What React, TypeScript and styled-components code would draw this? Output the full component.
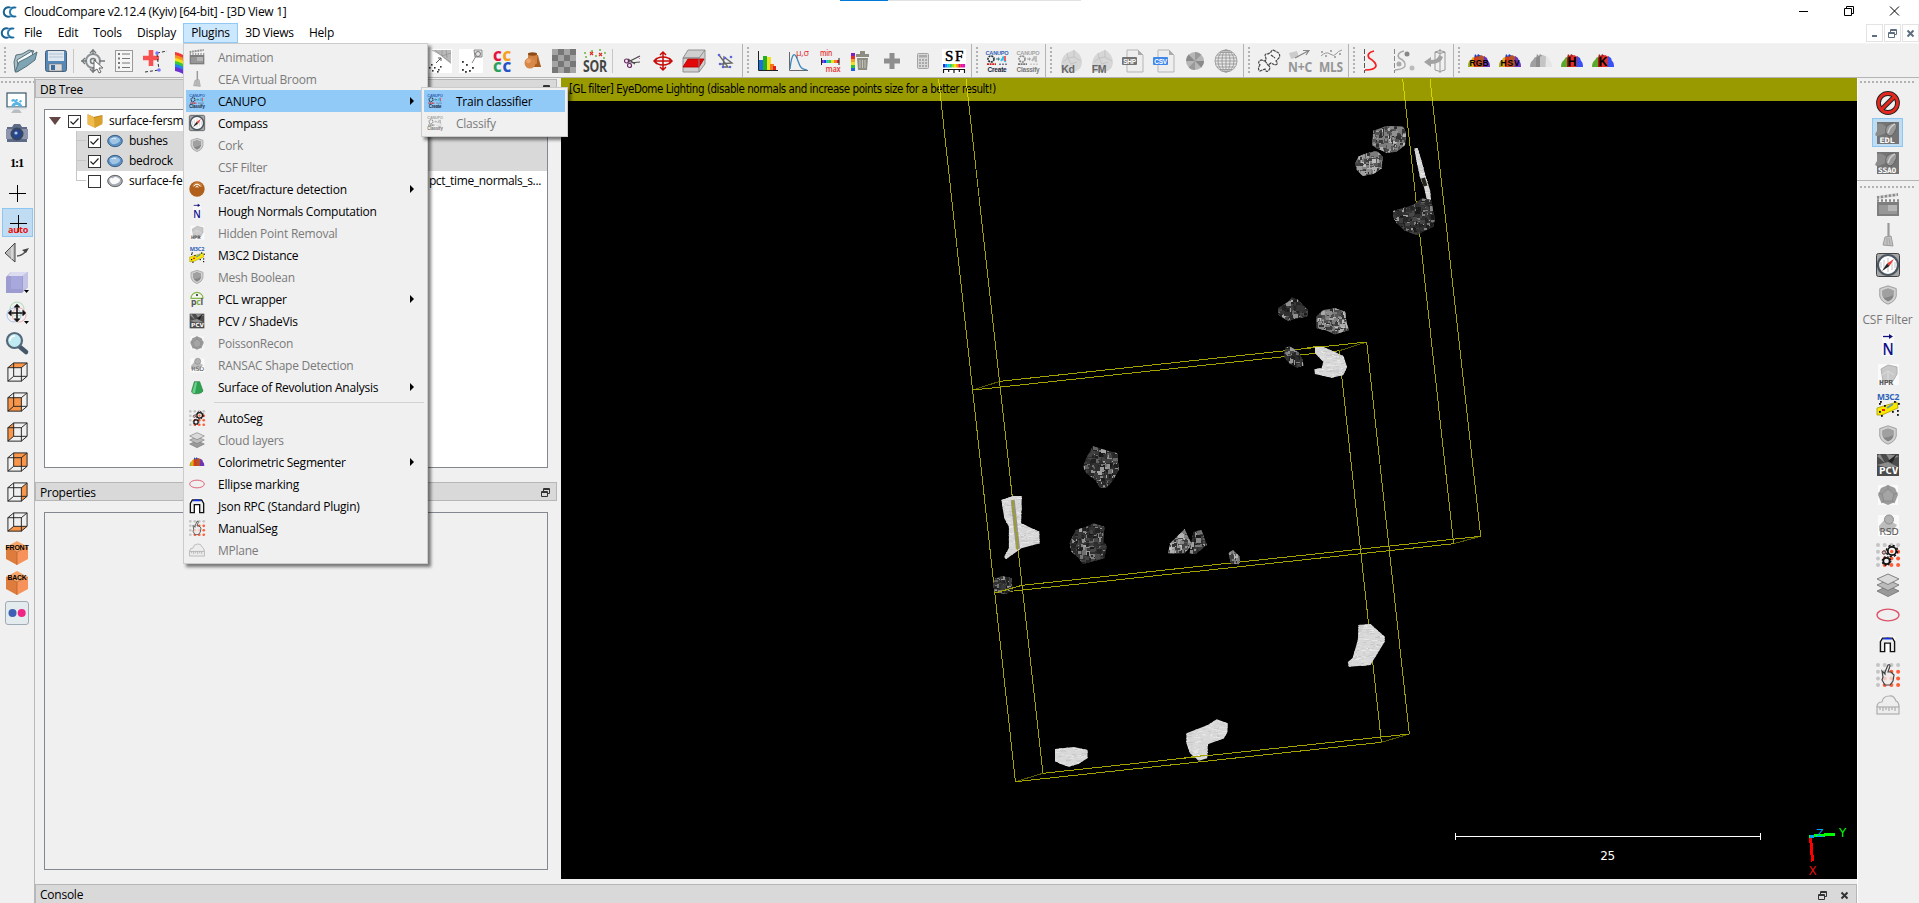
import React from "react";
import styled, { createGlobalStyle } from "styled-components";

const GlobalStyle = createGlobalStyle`
  *, *::before, *::after { box-sizing: border-box; }
  body { margin: 0; overflow: hidden; background: #f0f0f0; }
  text { user-select: none; }
`;

/* ---------- icon drawings (24 x 24 grid) ---------- */

const Dots = () => (
  <g>
    {[0, 1, 2, 3].map((r) =>
      [0, 1, 2, 3].map((c) => (
        <circle key={`${r}${c}`} cx={2 + c * 6.7} cy={2 + r * 6.7} r="2" fill={c === 0 || r === 0 || r + c < 3 ? "#c4c4c4" : "#ff5c38"} />
      ))
    )}
  </g>
);

type Face = "top" | "front" | "left" | "back" | "right" | "bottom";
const faces: Record<Face, string> = {
  top: "2,7 8,2 22,2 16,7",
  front: "2,7 16,7 16,21 2,21",
  left: "2,7 8,2 8,16 2,21",
  back: "8,2 22,2 22,16 8,16",
  right: "16,7 22,2 22,16 16,21",
  bottom: "2,21 8,16 22,16 16,21",
};
const Cube = ({ face }: { face: Face }) => (
  <g>
    <polygon points={faces[face]} fill="#f9964a" />
    <g fill="none" stroke="#222" strokeWidth="1">
      <rect x="2" y="7" width="14" height="14" />
      <path d="M8 2H22V16H8ZM2 7L8 2M16 7L22 2M2 21L8 16M16 21L22 16" />
    </g>
  </g>
);

const BoxView = ({ label }: { label: string }) => (
  <g>
    <polygon points="12,0 23,6 12,11 1,6" fill="#f6a468" />
    <polygon points="1,6 12,11 12,24 1,18" fill="#dd7c3c" />
    <polygon points="23,6 12,11 12,24 23,18" fill="#f7935a" />
    <path d="M1 6L12 11L23 6M12 11V24" fill="none" stroke="#b5602a" strokeWidth=".7" />
    <text x="12" y="8.500" fontSize="7.400" fontWeight="700" textAnchor="middle" fontFamily="Liberation Sans, sans-serif" textLength={label === "BACK" ? 19 : 23} lengthAdjust="spacingAndGlyphs">{label}</text>
  </g>
);

const Shield = () => (
  <g>
    <path d="M12 2L21 5V13Q20 19 12 22Q4 19 3 13V5Z" fill="#d0d0d0" stroke="#9a9a9a" />
    <path d="M12 5L18 7V13Q17 17 12 19Q7 17 6 12V7Z" fill="#858585" />
    <path d="M12 5L18 7V12Q12 15 8 15Q6 13 6 12V7Z" fill="#a0a0a0" />
  </g>
);

const Canupo = ({ label, grey }: { label: string; grey?: boolean }) => (
  <g fontFamily="Liberation Sans, sans-serif" fontWeight="700" textAnchor="middle">
    <text x="12" y="5.600" fontSize="6" fill={grey ? "#a3a3a3" : "#3264b4"} textLength="23" lengthAdjust="spacingAndGlyphs">CANUPO</text>
    <circle cx="6" cy="10" r="3" fill="none" stroke={grey ? "#8a8a8a" : "#20323c"} strokeWidth="1.600" strokeDasharray="2 .8" />
    <path d="M11 10H14M13 8.600L14.500 10L13 11.400" stroke={grey ? "#999" : "#267"} fill="none" />
    <path d="M16 12L19 7M17 9L21 13" stroke={grey ? "#bbb" : "#2fc3f0"} strokeWidth="2" strokeDasharray="2.400 .6" />
    <path d="M20 7V12" stroke={grey ? "#bbb" : "#f05050"} strokeWidth="1.800" />
    <path d="M2 15.200H11" stroke={grey ? "#777" : "#c22"} strokeWidth="1.800" strokeDasharray="2 .6" />
    <path d="M14 15.200H22" stroke={grey ? "#bbb" : "#446"} strokeWidth="1" strokeDasharray="2 1" />
    <text x="12" y="23" fontSize="7.200" fill={grey ? "#777" : "#18253c"} textLength={label === "Create" ? 19 : 23} lengthAdjust="spacingAndGlyphs">{label}</text>
  </g>
);

const Texture = ({ label }: { label: string }) => (
  <g>
    <rect x="1" y="1" width="22" height="22" fill="#747474" />
    <path d="M1 3Q6 1 10 6T5 14T1 10Z" fill="#8b8b8b" />
    <path d="M10 12Q8 4 17 2Q24 2 18 12Q14 18 10 12Z" fill="#999" stroke="#555" strokeWidth=".7" />
    <path d="M12 12Q14 5 19 3" stroke="#ccc" strokeWidth="1.500" fill="none" />
    <text x="11" y="21.500" fontSize="7.500" fontWeight="700" fill="#fff" textAnchor="middle" fontFamily="DejaVu Sans Mono, monospace" textLength={label.length > 3 ? 18 : 15} lengthAdjust="spacingAndGlyphs">{label}</text>
  </g>
);

const Hills = ({ letters, mode }: { letters: string; mode: "rgb" | "grey" | "hk" }) => {
  const c = mode === "rgb" ? ["#e0a818", "#d63a18", "#b5522c", "#6a35b8", "#2440c0"] : mode === "grey" ? ["#a0a0a0", "#8c8c8c", "#c4c4c4", "#e6e6e6", "#999"] : ["#5aa82c", "#b01818", "#e23028", "#3850f4", "#a02020"];
  return (
    <g>
      <path d="M7 9L8 5L10 7L11 5L14 7V17H6Z" fill={c[4]} />
      <path d="M1 18Q1 13 4 11L6 8L9 9V18Z" fill={c[0]} />
      {mode === "rgb" && <path d="M1 18Q1 13 3 11.500V18Z" fill="#8eb52c" />}
      <path d="M7 18V9L10 7L13 9V18Z" fill={c[1]} />
      <path d="M11 18V8L14 6L18 8V18Z" fill={c[2]} />
      <path d="M16.500 18L17 7L20 9L21 12Q23 13 23 18Z" fill={c[3]} />
      {letters && <text x="12" y="17" fontSize={letters.length > 1 ? 8.5 : 12.5} fontWeight="700" textAnchor="middle" fontFamily="Liberation Sans, sans-serif" textLength={letters.length > 1 ? 19 : undefined}>{letters}</text>}
    </g>
  );
};

const Page = ({ label, blue }: { label: string; blue?: boolean }) => (
  <g>
    <path d="M6 1H17L22 6V23H6Z" fill="#eee" stroke="#b5b5b5" />
    <path d="M17 1V6H22Z" fill="#aaa" />
    <rect x="1" y="8" width="15" height="8" rx="1" fill={blue ? "#3f87ea" : "#747474"} />
    <text x="8.500" y="14.600" fontSize="6.500" fontWeight="700" fill="#fff" textAnchor="middle" fontFamily="Liberation Sans, sans-serif">{label}</text>
  </g>
);

const Rock24 = ({ label }: { label: string }) => (
  <g>
    <path d="M2 19Q1 9 8 4L15 1Q23 5 23 14Q22 22 14 23H4Z" fill="#d6d6d6" />
    <path d="M4 13L9 9L8 4M9 9L15 8L15 1M15 8L22 12M9 9L12 15L18 13" fill="none" stroke="#bbb" strokeWidth=".7" />
    <text x="9" y="23.500" fontSize="10.500" fontWeight="700" fill="#666" textAnchor="middle" fontFamily="Liberation Sans, sans-serif">{label}</text>
  </g>
);

const OverText = ({ children, y, size, fill, w }: { children: string; y: number; size: number; fill: string; w?: number }) => (
  <text x="12" y={y} fontSize={size} fontWeight="700" fill={fill} textAnchor="middle" fontFamily="Open Sans, sans-serif" textLength={w} lengthAdjust="spacingAndGlyphs">{children}</text>
);

const drawings: Record<string, React.ReactNode> = {
  logo: (
    <g fill="none" strokeWidth="3.400">
      <path d="M12 4.500A8 8 0 1 0 12 19.500" stroke="#17608f" />
      <path d="M22 5A7.500 7.500 0 1 0 22 19" stroke="#2c7db0" />
      <path d="M10 4H23M10 20H23" stroke="#17608f" strokeWidth="1.500" />
    </g>
  ),
  open: (
    <g stroke="#4d6670" strokeWidth=".9" strokeLinejoin="round">
      <path d="M1 13L3 6L9 5L16 1L21 2L6 22H2Z" fill="#a9bfc8" />
      <path d="M4 11L19 2L20 8L6 21Z" fill="#f8fbfc" />
      <path d="M2 23L6 13L14 9L24 3L22 11L14 17L4 23Z" fill="#7fa4b4" />
    </g>
  ),
  save: (
    <g>
      <rect x="1.500" y="1.500" width="21" height="21" rx="2" fill="#5488b8" stroke="#4a5f73" />
      <rect x="4" y="2" width="16" height="10" fill="#dfe8f0" />
      <path d="M5 5H19M5 8H19" stroke="#b2c4d4" />
      <path d="M5 15H18V22H5Z" fill="#dcdcdc" stroke="#777" strokeWidth=".6" />
      <rect x="7" y="16" width="4" height="5" fill="#3a6ea0" />
    </g>
  ),
  pick: (
    <g fill="none" stroke="#747a7d" strokeWidth="2">
      <circle cx="12" cy="12" r="7" stroke="#8d9396" />
      <circle cx="12" cy="12" r="2.500" strokeWidth="1.500" />
      <path d="M12 0V6M12 18V24M0 12H6M18 12H24M9 4L12 1L15 4M4 9L1 12L4 15M9 20L12 23L15 20" strokeWidth="1.300" />
      <path d="M13 11L22 19L18 19L20 23L18 24L16 20L13 22Z" fill="#fff" strokeWidth="1" stroke="#666" />
    </g>
  ),
  list: (
    <g>
      <rect x="3.500" y="1.500" width="17" height="21" fill="#f5f5f5" stroke="#999" />
      <path d="M10 5H18M10 9.500H18M10 14H18M10 18.500H18" stroke="#777" />
      <path d="M6 5H8M6 9.500H8M6 14H8M6 18.500H8" stroke="#777" strokeWidth="2" />
    </g>
  ),
  pointPick: (
    <g>
      <path d="M0 9H16M8 1V17" stroke="#f65050" strokeWidth="4.600" />
      <path d="M14 4L24 2M14 5L16 21M2 23L16 21" stroke="#333" strokeDasharray="3 2" fill="none" />
      <circle cx="14" cy="4" r="1.800" fill="#77f" />
      <circle cx="16" cy="21" r="1.800" fill="#77f" />
    </g>
  ),
  rainbow: (
    <g>
      {["#f03838", "#f59420", "#f1e318", "#38c838", "#2880f0", "#6b30d0"].map((c, i) => (
        <path key={c} d={`M1 ${3 + i * 3}Q7 ${4 + i * 3} 14 ${9 + i * 3}V${13 + i * 3}Q7 ${8 + i * 3} 1 ${7 + i * 3}Z`} fill={c} />
      ))}
    </g>
  ),
  meshDist: (
    <g>
      <rect width="24" height="24" fill="#fff" />
      <path d="M3 1H23V15L12 6Z" fill="#b9b9b9" />
      <path d="M7 1L14 7L23 4M14 1L14 7L22 13M18 1L19 9" fill="none" stroke="#888" strokeWidth=".6" />
      <path d="M8 14L13 9M13 9V12M13 9H10" stroke="#555" fill="none" />
      {[[3, 15], [6, 18], [4, 21], [10, 20], [12, 17], [9, 22], [1, 18]].map(([x, y]) => <rect key={`${x}${y}`} x={x} y={y} width="1.600" height="1.600" fill="#333" />)}
    </g>
  ),
  sampling: (
    <g>
      <rect width="24" height="24" fill="#fff" />
      <path d="M13 14L17 7M15 1H23V8H16Z" stroke="#888" fill="#e5e5e5" />
      <circle cx="19" cy="5" r="2.500" fill="none" stroke="#777" />
      {[[3, 12], [7, 15], [3, 20], [10, 21], [13, 18], [6, 22]].map(([x, y]) => <rect key={`${x}${y}`} x={x} y={y} width="1.800" height="1.800" fill="#333" />)}
    </g>
  ),
  cccc: (
    <g fontFamily="Open Sans, sans-serif" fontWeight="800" fontSize="13.500">
      <text x="3" y="11.500" fill="#e6143c">C<tspan x="12.500" fill="#f5a018">C</tspan></text>
      <text x="3" y="22.500" fill="#28a060">C<tspan x="12.500" fill="#2850c8">C</tspan></text>
    </g>
  ),
  shapes: (
    <g>
      <path d="M12 6H17L20 18H12Z" fill="#b66a2c" />
      <path d="M16 8L20 18H10Z" fill="#a85e22" />
      <rect x="7" y="4" width="9" height="11" rx="1" fill="#cf8245" />
      <ellipse cx="11.500" cy="5" rx="4.500" ry="1.700" fill="#8c4a16" />
      <circle cx="9" cy="14" r="5.500" fill="#d88848" />
      <circle cx="7.500" cy="12" r="2.300" fill="#eaa56e" />
    </g>
  ),
  checker: (
    <g>
      <rect width="24" height="24" fill="#777" />
      {[0, 1, 2, 3].map((r) => [0, 1].map((c) => <rect key={`${r}${c}`} x={(r % 2 ? 6 : 0) + c * 12} y={r * 6} width="6" height="6" fill="#a4a4a4" />))}
    </g>
  ),
  sor: (
    <g>
      {[[2, 4], [9, 2], [17, 1], [22, 4], [13, 7], [21, 9], [3, 8]].map(([x, y]) => <circle key={`${x}${y}`} cx={x} cy={y} r="1" fill="#69b43c" />)}
      <path d="M7 3L10 6M10 3L7 6M16 4L19 7M19 4L16 7" stroke="#d83020" strokeWidth="1.200" />
      <OverText y={23} size={15.5} fill="#444" w={24}>SOR</OverText>
    </g>
  ),
  scissors: (
    <g fill="none">
      <path d="M8 13L20 7M9 14L20 13M8 10L15 15" stroke="#4a4a4a" strokeWidth="1.200" />
      <circle cx="6.500" cy="12" r="2" stroke="#6d2868" strokeWidth="1.200" />
      <circle cx="9.500" cy="16.500" r="2" stroke="#6d2868" strokeWidth="1.200" />
      <path d="M17 7L20 10" stroke="#b8b" />
    </g>
  ),
  translate: (
    <g fill="none" stroke="#c80c0c" strokeWidth="1.500">
      <path d="M12 3V21M9 6L12 3L15 6M9 18L12 21L15 18M4 12H20M6 9L3 12L6 15M18 9L21 12L18 15" />
      <ellipse cx="12" cy="12" rx="7.500" ry="4" />
    </g>
  ),
  section: (
    <g stroke="#888" strokeWidth=".9">
      <path d="M6 1H23V15L17 23H1V9Z" fill="#cfcfcf" />
      <path d="M1 9H17L23 1M17 9V23" fill="none" />
      <path d="M6 10H22L17 18H1Z" fill="#e00808" stroke="#b00" />
      <path d="M1 9H17V18" fill="none" />
    </g>
  ),
  polyline: (
    <g>
      <path d="M6 6L15 18L10 18L11 8L19 14L7 15" fill="none" stroke="#666" strokeWidth="1.300" />
      {[[6, 6], [17, 18], [10, 18], [12, 9], [18, 8], [7, 15]].map(([x, y]) => <circle key={`${x}${y}`} cx={x} cy={y} r="1.300" fill="#5c64dc" />)}
    </g>
  ),
  histogram: (
    <g>
      <path d="M3 11H7V21H3Z" fill="#1870d8" /><path d="M7 7H11V21H7Z" fill="#24b024" /><path d="M11 8H15V21H11Z" fill="#f0e020" /><path d="M14 15H18V21H14Z" fill="#f07a18" /><path d="M17 17H20V21H17Z" fill="#e02020" />
      <path d="M2.500 2V21.500H22" stroke="#222" fill="none" />
    </g>
  ),
  gauss: (
    <g>
      <path d="M2.500 3V21.500H21" stroke="#666" fill="none" />
      <path d="M3 20C5 2 8 3 11 12S16 20 20 21" fill="none" stroke="#3c88b8" strokeWidth="1.300" />
      <text x="9" y="6.500" fontSize="9" fill="#e03030" fontFamily="Open Sans, sans-serif">μ,σ</text>
    </g>
  ),
  minmax: (
    <g>
      {["#8020c0", "#2040f0", "#20c0c0", "#40d020", "#f0e020", "#f08020", "#f02020"].map((c, i) => <rect key={c} x={3 + i * 2.6} y="11" width="2.600" height="3" fill={c} />)}
      <path d="M3.500 9V16M21 9V16" stroke="#222" />
      <text x="2" y="6.500" fontSize="8" fontWeight="600" fill="#e23232" fontFamily="Open Sans, sans-serif" textLength="12" lengthAdjust="spacingAndGlyphs">min</text>
      <text x="15" y="22.500" fontSize="8.500" fontWeight="600" fill="#e23232" textAnchor="middle" fontFamily="Open Sans, sans-serif" textLength="15" lengthAdjust="spacingAndGlyphs">max</text>
    </g>
  ),
  trash: (
    <g>
      {["#8020c0", "#e03030", "#f0a020", "#e8e020", "#30c030", "#2060e0"].map((c, i) => <rect key={c} x="2" y={4 + i * 3} width="4" height="3" fill={c} />)}
      <path d="M7 5H20V8H7ZM11 2H16V5H11ZM8 9H19L18 21H9Z" fill="#8d8d82" />
      <path d="M11 11V19M13.500 11V19M16 11V19" stroke="#c8c8be" />
    </g>
  ),
  plus: <path d="M4 12H20M12 4V20" stroke="#8e8e8e" strokeWidth="5" />,
  calc: (
    <g>
      <rect x="6.500" y="4.500" width="11" height="15" rx="1" fill="#d8d8d8" stroke="#a3a3a3" />
      <rect x="8" y="6" width="8" height="2.500" fill="#aaa" />
      <path d="M8 11H16M8 14H16M8 17H16" stroke="#999" strokeWidth="1.600" strokeDasharray="2 1" />
    </g>
  ),
  sf: (
    <g>
      <rect width="24" height="24" fill="#fff" />
      <text x="12" y="12" fontSize="15" textAnchor="middle" stroke="#000" strokeWidth=".5" fontFamily="Liberation Serif, serif" textLength="18">SF</text>
      {["#1830e0", "#1090f0", "#10c8e8", "#20d060", "#a0e020", "#f8e010", "#f89010", "#f02020", "#e81890", "#e010d0"].map((c, i) => <rect key={c} x={1 + i * 2.2} y="15" width="2.300" height="3.500" fill={c} />)}
      <path d="M1 20.500H23M1.500 20V24M6.700 20V23M12 20V24M17.300 20V23M22.500 20V24" stroke="#111" strokeWidth="1.200" fill="none" />
    </g>
  ),
  canupoCreate: <Canupo label="Create" />,
  canupoClassify: <Canupo label="Classify" />,
  canupoClassifyGrey: <Canupo label="Classify" grey />,
  kd: <Rock24 label="Kd" />,
  fm: <Rock24 label="FM" />,
  shp: <Page label="SHP" />,
  csv: <Page label="CSV" blue />,
  pie: (
    <g>
      <circle cx="12" cy="12" r="9" fill="#b6b6b6" />
      {[0, 90, 180, 270].map((a) => <path key={a} d="M12 12L12 3A9 9 0 0 1 18.400 5.600Z" fill={a % 180 ? "#8a8a8a" : "#999"} transform={`rotate(${a} 12 12)`} />)}
    </g>
  ),
  sphere: (
    <g fill="none" stroke="#999" strokeWidth=".9">
      <circle cx="12" cy="12" r="11" fill="#e8e8e8" />
      <ellipse cx="12" cy="12" rx="8" ry="11" /><ellipse cx="12" cy="12" rx="4" ry="11" />
      <path d="M1 12H23M2 9H22M2 15H22M3 6H21M3 18H21M6 3.500H18M6 20.500H18M12 1V23" />
    </g>
  ),
  puzzle: (
    <path d="M8 7Q8 4 11 5L14 3Q15 0 18 2L20 3Q24 5 22 9L19 12Q22 15 18 16L14 14L11 16Q14 18 12 21Q9 24 8 20L3 22Q0 20 3 16Q0 13 4 11L8 12Q10 10 8 7ZM8 12L11 16M14 6L18 9" fill="#f4f4f4" stroke="#444" strokeWidth="1.200" strokeDasharray="3 .6" />
  ),
  nc: (
    <g>
      <path d="M1 4L9 2L11 8L3 10Z" fill="#ccc" />
      <path d="M7 9L20 2M15 1.500H21L18 6" stroke="#888" fill="none" strokeWidth="1.200" />
      <OverText y={23} size={14.5} fill="#969696" w={24}>N+C</OverText>
    </g>
  ),
  mls: (
    <g>
      <path d="M2 7Q7 2 11 5T17 5T23 1" fill="none" stroke="#999" />
      {[[3, 3], [7, 7], [12, 2], [16, 8], [21, 5]].map(([x, y]) => <circle key={x} cx={x} cy={y} r=".9" fill="#888" />)}
      <OverText y={23} size={14.5} fill="#969696" w={24}>MLS</OverText>
    </g>
  ),
  sRed: (
    <g fill="none">
      <path d="M2.500 0V24" stroke="#555" strokeDasharray="5 2" />
      <path d="M12 2Q4 4 7 9Q14 13 14 17Q13 21 3 21" stroke="#f42020" strokeWidth="1.700" />
    </g>
  ),
  sGrey: (
    <g fill="none">
      <path d="M1.500 0V24" stroke="#888" strokeDasharray="5 2" />
      <path d="M11 2Q3 4 6 9Q13 12 12 17Q11 20 2 21" stroke="#aaa" strokeWidth="1.500" />
      <circle cx="14" cy="5" r="2.500" fill="#888" /><circle cx="6" cy="15" r="2.500" fill="#aaa" /><circle cx="19" cy="19" r="2.500" fill="#bbb" />
    </g>
  ),
  unroll: (
    <g fill="none" stroke="#999">
      <path d="M11 3V21Q16 24 21 21V3Q16 0 11 3Q16 6 21 3M16 0V24" />
      <path d="M0 13L7 8V11Q14 11 15 6L19 8Q17 15 7 15V18Z" fill="#a2a2a2" stroke="none" />
    </g>
  ),
  rgb: <Hills letters="RGB" mode="rgb" />,
  hsv: <Hills letters="HSV" mode="rgb" />,
  greyHills: <Hills letters="" mode="grey" />,
  colorHills: <Hills letters="" mode="rgb" />,
  hHills: <Hills letters="H" mode="hk" />,
  kHills: <Hills letters="K" mode="hk" />,
  monitor: (
    <g>
      <rect x="2" y="2" width="19" height="14" fill="#fff" stroke="#35566c" strokeWidth="1.200" />
      <path d="M6 15.500A6 6 0 0 1 17.500 15.500H14A2.500 2.500 0 0 0 9.500 15.500Z" fill="#5ab4e6" />
      <path d="M6.500 10L8.500 9L15 14M11.700 8V10M16.500 9.500L14.500 11" stroke="#5ab4e6" strokeWidth="2" fill="none" />
      <path d="M1.500 16.500H21.500V18.500H1.500Z" fill="#dde2e6" /><path d="M9 18.500H14L17 22H6Z" fill="#b8bec4" />
    </g>
  ),
  camera: (
    <g>
      <path d="M2 6H7L9 3H15L17 6H22V21H2Z" fill="#5d6b86" />
      <rect x="1" y="8" width="22" height="10" fill="#8d96ad" />
      <circle cx="12" cy="13" r="6.500" fill="#3a4660" /><circle cx="12" cy="13" r="4.500" fill="#26468c" /><circle cx="11" cy="12" r="1.600" fill="#b4c8f0" />
    </g>
  ),
  one: <text x="12" y="16" fontSize="12.500" fontWeight="700" textAnchor="middle" fontFamily="Liberation Serif, serif" textLength="14">1:1</text>,
  cross: <path d="M12.500 4V21M4 12.500H21" stroke="#000" fill="none" />,
  auto: (
    <g>
      <path d="M13.500 4V21M5 12.500H22" stroke="#000" fill="none" />
      <text x="13" y="22" fontSize="9.500" fontWeight="700" fill="#e81010" textAnchor="middle" fontFamily="Open Sans, sans-serif" textLength="20" lengthAdjust="spacingAndGlyphs">auto</text>
    </g>
  ),
  camDir: (
    <g>
      <path d="M10 2V21L0 12Z" fill="#bbb" stroke="#444" /><path d="M7 6V18" stroke="#eee" />
      <path d="M12 15Q17 15 21 10" fill="none" stroke="#555" strokeWidth="1.500" /><path d="M24 7L17 9L21 12Z" fill="#444" />
    </g>
  ),
  purple: (
    <g>
      <path d="M6 1H23V16L17 22H1V6Z" fill="#9c9cd0" /><path d="M6 1H23L18 5H3Z" fill="#dcdcf0" /><rect x="6" y="5" width="11" height="13" fill="#a8a8dc" /><path d="M18 5L23 1V16L18 20Z" fill="#c4c4e6" />
      <path d="M19 19H24L21.500 22Z" fill="#000" />
    </g>
  ),
  move: (
    <g fill="none">
      <circle cx="12" cy="8" r="7" stroke="#a9dcb0" /><circle cx="9" cy="14" r="7" stroke="#a8c4ee" /><circle cx="14" cy="14" r="7" stroke="#f0b0b0" />
      <path d="M12 4V20M4 12H20M9.500 6.500L12 4L14.500 6.500M9.500 17.500L12 20L14.500 17.500M6.500 9.500L4 12L6.500 14.500M17.500 9.500L20 12L17.500 14.500" stroke="#111" strokeWidth="1.600" />
      <path d="M19 20H24L21.500 23Z" fill="#000" />
    </g>
  ),
  zoom: (
    <g>
      <path d="M15 16L21 21" stroke="#44586a" strokeWidth="4.600" strokeLinecap="round" />
      <circle cx="9.500" cy="9.500" r="7.500" fill="#bfeaf2" stroke="#54687a" strokeWidth="2.200" /><path d="M5 10Q5 5 10 5" fill="none" stroke="#fff" strokeWidth="1.500" />
    </g>
  ),
  cubeTop: <Cube face="top" />, cubeFront: <Cube face="front" />, cubeLeft: <Cube face="left" />,
  cubeBack: <Cube face="back" />, cubeRight: <Cube face="right" />, cubeBottom: <Cube face="bottom" />,
  isoFront: <BoxView label="FRONT" />, isoBack: <BoxView label="BACK" />,
  flickr: (
    <g>
      <rect x=".5" y=".5" width="23" height="23" rx="2.500" fill="#e4ebef" stroke="#9fabb3" />
      <circle cx="7.500" cy="12" r="4" fill="#3e60b4" /><circle cx="16.700" cy="12" r="4" fill="#f02484" />
    </g>
  ),
  forbid: (
    <g fill="none">
      <circle cx="12" cy="12" r="9.500" stroke="#222" strokeWidth="4.800" /><path d="M5.500 18.500L18.500 5.500" stroke="#222" strokeWidth="5" />
      <circle cx="12" cy="12" r="9.500" stroke="#e4281e" strokeWidth="2.800" /><path d="M5.500 18.500L18.500 5.500" stroke="#e4281e" strokeWidth="3" />
    </g>
  ),
  edl: <Texture label="EDL" />, ssao: <Texture label="SSAO" />,
  clapper: (
    <g>
      <rect x="1" y="9" width="22" height="14" fill="#7e7e7e" /><path d="M3 12H21V21H3Z" fill="#979797" /><path d="M12 12H21V18H12Z" fill="#b6b6b6" />
      <path d="M1 3L22 0V3L1 6Z" fill="#ccc" /><path d="M1 4.500L22 1.500M1 7.500H23" stroke="#888" strokeWidth="2.500" strokeDasharray="2 2" />
    </g>
  ),
  broom: (
    <g>
      <path d="M12.500 0V14" stroke="#999" strokeWidth="2.200" /><path d="M9 14L15 13L17 23L7 22Z" fill="#c2c2c2" stroke="#9c9c9c" /><path d="M11 15V22M13 15L14 22" stroke="#999" strokeWidth=".7" />
    </g>
  ),
  compass: (
    <g>
      <rect x=".5" y=".5" width="23" height="23" rx="2" fill="#a6a6a6" stroke="#444" />
      <circle cx="12" cy="12" r="10" fill="#fff" stroke="#4b5763" strokeWidth="2.200" />
      <path d="M5 9V15M8 7V17M12 5V19M16 7V17M19 9V15" stroke="#aaa" strokeWidth=".7" />
      <path d="M18 6L13.500 13L11 10.500Z" fill="#e83c34" /><path d="M6 18L11 10.500L13.500 13Z" fill="#222" />
    </g>
  ),
  shield: <Shield />,
  facet: (
    <g>
      <circle cx="12" cy="12" r="11.500" fill="#b0601c" /><path d="M5 8Q7 1 14 2Q21 5 20 9Z" fill="#c9803c" />
      <path d="M7 8A5.500 5.500 0 0 1 17 8M10 9.500A2.500 2.500 0 0 1 14 9.500" fill="none" stroke="#fff" strokeWidth="1.500" />
    </g>
  ),
  hough: (
    <g>
      <rect x="6" y="1" width="12" height="22" fill="#f8f8f8" />
      <path d="M7 3.500H15" stroke="#10107c" strokeWidth="1.300" /><path d="M13 1L17 3.500L13 6Z" fill="#10107c" />
      <text x="12" y="22" fontSize="16" fontWeight="600" fill="#10108c" textAnchor="middle" fontFamily="Open Sans, sans-serif" textLength="11" lengthAdjust="spacingAndGlyphs">N</text>
    </g>
  ),
  hpr: (
    <g>
      <rect x="2" y="1" width="21" height="21" fill="#fafafa" /><path d="M5 6L12 2L21 4V11L17 18H7Z" fill="#c8c8c8" stroke="#b2b2b2" /><path d="M6 12L12 8L18 12M12 8L12 17" stroke="#ddd" fill="none" />
      <text x="10" y="21.500" fontSize="7" fontWeight="700" fill="#555" textAnchor="middle" fontFamily="DejaVu Sans Mono, monospace" textLength="14" lengthAdjust="spacingAndGlyphs">HPR</text>
    </g>
  ),
  m3c2: (
    <g>
      <OverText y={6.5} size={8} fill="#2c62b8" w={22}>M3C2</OverText>
      <path d="M1 15L21 9L22 15L6 22H1Z" fill="#f8e800" stroke="#a89a00" strokeWidth=".8" /><path d="M11 15L17 11" stroke="#69a" strokeWidth="2" />
      {[[3, 10], [8, 12], [4, 8], [18, 8], [22, 10], [21, 17], [21, 21], [5, 22], [16, 18], [3, 18]].map(([x, y]) => <rect key={`${x}-${y}`} x={x} y={y} width="1.800" height="1.800" fill="#111" />)}
      <rect x="6" y="16" width="3" height="2" fill="#e22" />
    </g>
  ),
  pcl: (
    <g>
      <path d="M3 11A9 9 0 1 1 21 11Z" fill="#f4f8f0" stroke="#84b84c" strokeWidth="1.800" /><circle cx="12" cy="6" r="1.600" fill="#333" />
      <text x="12" y="21" fontSize="13" fontWeight="700" fill="#555" textAnchor="middle" fontFamily="Open Sans, sans-serif">p<tspan fill="#78b040">c</tspan>l</text>
    </g>
  ),
  pcv: (
    <g>
      <rect x="1" y="1" width="22" height="22" fill="#4c4c4c" /><path d="M1 3L9 10L4 1ZM10 1L14 8L23 3ZM1 12L12 9L22 14L9 14Z" fill="#8d8d8d" /><path d="M12 8L21 1L16 10Z" fill="#222" />
      <text x="12.500" y="20.500" fontSize="8.500" fontWeight="700" fill="#fff" textAnchor="middle" fontFamily="DejaVu Sans Mono, monospace" textLength="19" lengthAdjust="spacingAndGlyphs">PCV</text>
    </g>
  ),
  poisson: (
    <g>
      <rect x="2" y="2" width="20" height="20" fill="#fafafa" /><path d="M12 2L19 5L22 12L19 19L12 22L5 19L2 12L5 5Z" fill="#9b9b9b" /><path d="M12 6L18 11L16 18H8L6 11ZM12 6V2M18 11L22 10M16 18L19 20M8 18L5 20M6 11L2 10" fill="#a5a5a5" stroke="#858585" strokeWidth=".8" />
    </g>
  ),
  rsd: (
    <g>
      <rect x="2" y="2" width="21" height="21" fill="#fafafa" /><path d="M10 5L3 13V18L16 19L21 12Z" fill="#bdbdbd" /><circle cx="13" cy="6.500" r="4.500" fill="#b2b2b2" stroke="#8d8d8d" />
      <text x="13" y="21.500" fontSize="9" fill="#555" textAnchor="middle" fontFamily="DejaVu Sans, sans-serif" textLength="19" lengthAdjust="spacingAndGlyphs">RSD</text>
    </g>
  ),
  cone: (
    <g>
      <path d="M8 4H16L21 18Q18 23 7 22Q3 20 4 18Z" fill="#2fa352" stroke="#2a7a40" /><path d="M9 5H12L9 21H6L5 19Z" fill="#6cd08c" />
    </g>
  ),
  autoseg: (
    <g>
      <Dots />
      <circle cx="16" cy="8" r="4.200" fill="#f0f0f0" stroke="#111" strokeWidth="1.800" /><circle cx="16" cy="8" r="5.600" fill="none" stroke="#111" strokeWidth="1.500" strokeDasharray="2.200 2.200" />
      <circle cx="15.700" cy="8.500" r="1.700" fill="#ff5c38" />
      <circle cx="10.500" cy="18" r="3.200" fill="#f0f0f0" stroke="#111" strokeWidth="1.700" /><circle cx="10.500" cy="18" r="4.300" fill="none" stroke="#111" strokeWidth="1.200" strokeDasharray="1.700 1.700" /><circle cx="8" cy="9.500" r="1.700" fill="none" stroke="#622" />
    </g>
  ),
  layers: (
    <g stroke="#777" strokeWidth=".9">
      <polygon points="12,13 23,18 12,23.500 1,18" fill="#999" /><polygon points="12,7 23,12 12,17.500 1,12" fill="#bbb" /><polygon points="12,1 23,6 12,11.500 1,6" fill="#dadada" />
    </g>
  ),
  ellipse: <ellipse cx="12" cy="12" rx="11" ry="5.800" fill="none" stroke="#dc5068" strokeWidth="1.300" />,
  json: (
    <g>
      <rect x="1" y="1" width="22" height="22" fill="#fff" /><path d="M2 22V8L5 3H19L22 8V22H16V10H8V22Z" fill="#eee" stroke="#111" strokeWidth="2" /><path d="M5 5Q12 -1 19 5Z" fill="#1030e8" />
    </g>
  ),
  manual: (
    <g>
      <Dots /><path d="M7 14L6 8L9 11V9L12 2Q14 1 14 3L12 9H15L18 12L17 18L14 22H9L6 17Z" fill="#efeae8" stroke="#444" strokeWidth="1.200" fillOpacity=".75" />
    </g>
  ),
  mplane: (
    <g fill="#ededed" stroke="#adadad" strokeWidth="1.200">
      <path d="M1 14Q1 9 6 9Q7 3 13 3Q18 2 20 8Q23 9 23 14" /><rect x="1" y="14" width="22" height="7" /><path d="M4 14V17M7 14V18M10 14V17M13 14V18M16 14V17M19 14V18" />
    </g>
  ),
  tree: (
    <g>
      <path d="M1 2L10 6L23 3V15L12 22L1 17Z" fill="#b87f1c" /><path d="M9 8L23 4V17L12 22Z" fill="#d9a02c" /><path d="M1 2L10 6L12 22L1 17Z" fill="#efbb4c" />
    </g>
  ),
  cloud: (
    <g>
      <ellipse cx="12" cy="12" rx="11" ry="8.500" fill="#5f93c4" stroke="#2c557d" strokeWidth="1.300" /><path d="M4 12Q3 6 9 8Q12 4 16 7Q22 9 18 14Q10 19 6 15Z" fill="#a0c4e4" /><path d="M7 9Q10 6 13 9" stroke="#e4f2ff" strokeWidth="1.600" fill="none" />
    </g>
  ),
  cloudGrey: (
    <g>
      <ellipse cx="12" cy="12" rx="11" ry="8.500" fill="#a9adb6" stroke="#555" strokeWidth="1.300" /><path d="M4 12Q3 6 9 8Q12 4 16 7Q22 9 18 14Q10 19 6 15Z" fill="#fafafa" />
    </g>
  ),
};

const IconSvg = styled.svg<{ $size: number }>`
  width: ${(p) => p.$size}px;
  height: ${(p) => p.$size}px;
  flex: none;
  display: block;
  overflow: visible;
`;
const Icon = ({ name, size = 24 }: { name: string; size?: number }) => (
  <IconSvg $size={size} viewBox="0 0 24 24">{drawings[name]}</IconSvg>
);

/* ---------- shell ---------- */

const Shell = styled.div`
  position: relative;
  width: 1919px;
  height: 903px;
  overflow: hidden;
  display: flex;
  flex-direction: column;
  background: #f0f0f0;
  color: #000;
  font: 12px/16px "Open Sans", "Noto Sans", sans-serif;
  letter-spacing: -0.24px;
  white-space: nowrap;
`;
const TitleBar = styled.header`
  display: flex;
  align-items: center;
  height: 22px;
  padding: 2px 19px 0 3px;
  background: #fff;
  flex: none;
`;
const TitleText = styled.span`
  flex: 1;
  margin-left: 7px;
  letter-spacing: -0.26px;
`;
const CaptionButtons = styled.div`
  display: flex;
  gap: 32px;
  margin-top: -3px;
`;
const Progress = styled.div`
  position: absolute;
  top: 0;
  left: 840px;
  width: 241px;
  height: 1px;
  background: linear-gradient(to right, #0078d7 48px, #e2e2e2 48px);
`;
const MenuBar = styled.nav`
  display: flex;
  align-items: center;
  height: 22px;
  padding: 1px 0 0 1px;
  background: #fff;
  border-bottom: 1px solid #f4f4f4;
  flex: none;
`;
const MenuTitle = styled.span<{ $w: number; $open?: boolean }>`
  width: ${(p) => p.$w}px;
  height: 20px;
  padding-top: 1px;
  text-align: center;
  border: 1px solid ${(p) => (p.$open ? "#90c8f6" : "transparent")};
  background: ${(p) => (p.$open ? "#cce8ff" : "transparent")};
`;
const MdiButtons = styled.div`
  display: flex;
  margin-left: auto;
  gap: 1px;
`;
const MdiButton = styled.span`
  width: 17px;
  height: 18px;
  border: 1px solid #e3e3e3;
  display: grid;
  place-items: center;
`;

const ToolBar = styled.div`
  display: flex;
  height: 34px;
  flex: none;
  border-bottom: 1px solid #b4b4b4;
`;
const ToolGroup = styled.div`
  display: flex;
  align-items: center;
  padding-right: 2px;
  border-right: 1px solid #b4b4b4;
`;
const Grip = styled.span<{ $row?: boolean }>`
  flex: none;
  width: ${(p) => (p.$row ? "56px" : "3px")};
  height: ${(p) => (p.$row ? "3px" : "28px")};
  margin: ${(p) => (p.$row ? "3px 0 0" : "0 2px 0 4px")};
  background-image: radial-gradient(circle at 1px 1px, #b2b2b2 1px, transparent 1.3px);
  background-size: 4px 4px;
`;
const Slot = styled.span`
  width: 31px;
  display: grid;
  place-items: center;
  flex: none;
`;
const ToolSeparator = styled.i`
  width: 1px;
  height: 24px;
  margin: 0 3px 0 2px;
  background: #c6c6c6;
`;
const UnderMenu = styled.span`
  width: 223px;
`;

const Body = styled.div`
  display: flex;
  flex: 1;
  min-height: 0;
`;
const SideBar = styled.aside`
  width: 35px;
  flex: none;
  display: flex;
  flex-direction: column;
  align-items: center;
  border-right: 1px solid #b8b8b8;
  overflow: hidden;
`;
const SideSlot = styled.span<{ $on?: boolean }>`
  width: 31px;
  height: 29px;
  margin-bottom: 1px;
  flex: none;
  display: grid;
  place-items: center;
  border: 1px solid ${(p) => (p.$on ? "#8ec6f2" : "transparent")};
  background: ${(p) => (p.$on ? "#c0dcf3" : "transparent")};
`;
const LeftIcons = styled.div`
  margin-top: 4px;
`;
const Center = styled.div`
  display: flex;
  flex-direction: column;
  flex: 1;
  min-width: 0;
`;
const CenterRow = styled.div`
  display: flex;
  height: 801px;
`;
const Docks = styled.section`
  width: 526px;
  flex: none;
  display: flex;
  flex-direction: column;
  padding: 1px 4px 9px 0;
`;
const DockTitle = styled.div`
  height: 19px;
  flex: none;
  display: flex;
  align-items: center;
  justify-content: space-between;
  padding: 2px 6px 0 4px;
  background: #d9d9d9;
  border: 1px solid #b6b6b6;
`;
const ConsoleTitle = styled(DockTitle)`
  margin-top: 5px;
  height: 20px;
  padding-right: 7px;
`;
const ConsoleRow = styled.div`
  display: flex;
  flex-direction: column;
  padding-left: 35px;
  background: linear-gradient(to right, transparent 34px, #b8b8b8 34px, #b8b8b8 35px, transparent 35px);
`;
const DockButtons = styled.span`
  display: flex;
  gap: 13px;
`;
const TreeBox = styled.div`
  height: 359px;
  margin: 11px 9px 14px 9px;
  padding-top: 1px;
  border: 1px solid #828790;
  background: #fff;
`;
const PropertyBox = styled.div`
  flex: 1;
  margin: 11px 9px 0 9px;
  border: 1px solid #828790;
`;
const TreeRow = styled.div<{ $child?: boolean; $selected?: boolean }>`
  display: flex;
  align-items: center;
  height: 20px;
  margin-left: ${(p) => (p.$child ? "31px" : "0")};
  padding: 0 6px 0 ${(p) => (p.$child ? "0" : "4px")};
  background: ${(p) => (p.$selected ? "#d9d9d9" : "transparent")};
`;
const Branch = styled.i<{ $last?: boolean }>`
  width: 10px;
  height: 20px;
  margin-right: 2px;
  background:
    linear-gradient(#c9c5c2, #c9c5c2) 0 0 / 1px ${(p) => (p.$last ? "10px" : "20px")} no-repeat,
    linear-gradient(#c9c5c2, #c9c5c2) 0 9px / 10px 1px no-repeat;
`;
const Check = styled.span`
  width: 13px;
  height: 13px;
  margin-right: 6px;
  border: 1px solid #333;
  background: #fff;
  display: grid;
  place-items: center;
`;
const TreeText = styled.span`
  margin-left: 6px;
`;
const RowTail = styled.span`
  margin-left: auto;
  letter-spacing: -0.35px;
`;

const ViewArea = styled.main`
  position: relative;
  width: 1296px;
  height: 801px;
  background: #000;
`;
const FilterStrip = styled.div`
  height: 23px;
  padding: 3px 0 0 8px;
  background: #999900;
  font: 11.5px/17px "DejaVu Sans Condensed", "DejaVu Sans", sans-serif;
  letter-spacing: -0.44px;
`;
const Scene = styled.svg`
  position: absolute;
  inset: 0;
  width: 1296px;
  height: 801px;
`;
const RightBar = styled.aside`
  width: 62px;
  flex: none;
  border-left: 1px solid #fff;
  padding-right: 2px;
  display: flex;
  flex-direction: column;
  align-items: center;
`;
const RightRule = styled.i`
  width: 62px;
  height: 1px;
  margin-bottom: 2px;
  background: #b5b5b5;
`;
const RightTop = styled.div`
  margin: 4px 0 2px;
`;
const RightGroup = styled.div`
  margin-top: 1px;
`;
const RightLabel = styled.span`
  height: 20px;
  padding-top: 2px;
  color: #777;
  letter-spacing: -0.15px;
`;

/* ---------- popup menus ---------- */

const Popup = styled.div<{ $x: number; $y: number; $w: number }>`
  position: absolute;
  left: ${(p) => p.$x}px;
  top: ${(p) => p.$y}px;
  width: ${(p) => p.$w}px;
  padding: 2px;
  background: #f0f0f0;
  border: 1px solid #ccc;
  box-shadow: 3px 3px 3px rgba(0, 0, 0, 0.5);
`;
const PopupRow = styled.div<{ $active?: boolean; $disabled?: boolean }>`
  display: flex;
  align-items: center;
  height: 22px;
  padding: 1px 11px 0 3px;
  color: ${(p) => (p.$disabled ? "#7a7a7a" : "#000")};
  background: ${(p) => (p.$active ? "#91c9f7" : "transparent")};
`;
const PopupIcon = styled.span`
  width: 16px;
  height: 16px;
  margin: -1px 13px 0 0;
  flex: none;
`;
const PopupArrow = styled.i`
  margin: -1px 0 0 auto;
  border: 4px solid transparent;
  border-left-color: #000;
  border-right: 0;
`;
const PopupRule = styled.hr`
  height: 1px;
  margin: 4px 1px 4px 28px;
  border: 0;
  background: #d2d2d2;
`;

type Entry = { label: string; icon?: string; off?: boolean; sub?: boolean; active?: boolean };
const pluginEntries: (Entry | null)[] = [
  { label: "Animation", icon: "clapper", off: true },
  { label: "CEA Virtual Broom", icon: "broom", off: true },
  { label: "CANUPO", icon: "canupoClassify", sub: true, active: true },
  { label: "Compass", icon: "compass" },
  { label: "Cork", icon: "shield", off: true },
  { label: "CSF Filter", off: true },
  { label: "Facet/fracture detection", icon: "facet", sub: true },
  { label: "Hough Normals Computation", icon: "hough" },
  { label: "Hidden Point Removal", icon: "hpr", off: true },
  { label: "M3C2 Distance", icon: "m3c2" },
  { label: "Mesh Boolean", icon: "shield", off: true },
  { label: "PCL wrapper", icon: "pcl", sub: true },
  { label: "PCV / ShadeVis", icon: "pcv" },
  { label: "PoissonRecon", icon: "poisson", off: true },
  { label: "RANSAC Shape Detection", icon: "rsd", off: true },
  { label: "Surface of Revolution Analysis", icon: "cone", sub: true },
  null,
  { label: "AutoSeg", icon: "autoseg" },
  { label: "Cloud layers", icon: "layers", off: true },
  { label: "Colorimetric Segmenter", icon: "colorHills", sub: true },
  { label: "Ellipse marking", icon: "ellipse" },
  { label: "Json RPC (Standard Plugin)", icon: "json" },
  { label: "ManualSeg", icon: "manual" },
  { label: "MPlane", icon: "mplane", off: true },
];
const canupoEntries: Entry[] = [
  { label: "Train classifier", icon: "canupoCreate", active: true },
  { label: "Classify", icon: "canupoClassifyGrey", off: true },
];

const MenuEntries = ({ entries }: { entries: (Entry | null)[] }) => (
  <>
    {entries.map((e, i) =>
      e ? (
        <PopupRow key={e.label} $active={e.active} $disabled={e.off}>
          <PopupIcon>{e.icon && <Icon name={e.icon} size={16} />}</PopupIcon>
          {e.label}
          {e.sub && <PopupArrow />}
        </PopupRow>
      ) : (
        <PopupRule key={i} />
      )
    )}
  </>
);

/* ---------- 3D scene ---------- */

type Tone = "light" | "dark" | "mixed";
type Stone = { id: string; tone: Tone; ox: number; oy: number; sx: number; pts: string };
const A = { ox: 1200, oy: 100, sx: 3 };
const B = { ox: 940, oy: 430, sx: 2.8 };
const stones: Stone[] = [
  { id: "a", tone: "mixed", ...A, pts: "520,92 560,78 610,80 618,100 615,135 590,155 560,158 530,145 516,135" },
  { id: "b", tone: "mixed", ...A, pts: "466,190 475,170 500,160 530,153 548,170 545,205 520,222 488,227 470,210" },
  { id: "c", tone: "light", ...A, pts: "643,145 653,145 664,180 677,230 690,270 693,300 681,300 672,262 660,232 649,180" },
  { id: "d", tone: "dark", ...A, pts: "579,333 640,315 665,295 693,300 700,335 705,355 700,380 680,390 650,405 615,392 590,370 579,350" },
  { id: "e", tone: "dark", ...A, pts: "234,625 265,605 275,592 295,600 323,630 322,650 290,655 265,663 236,645" },
  { id: "f", tone: "mixed", ...A, pts: "350,650 370,630 405,625 435,635 440,670 447,690 405,703 375,690 350,685" },
  { id: "g", tone: "dark", ...A, pts: "255,745 268,738 295,755 308,780 310,797 290,803 268,790 253,772" },
  { id: "h", tone: "light", ...A, pts: "345,738 365,738 395,752 430,768 441,800 430,825 395,833 345,822 343,808 365,805 370,785 345,760" },
  { id: "i", tone: "dark", ...B, pts: "400,110 412,80 428,48 445,55 497,70 500,120 485,150 468,172 448,173 435,150 410,130" },
  { id: "j", tone: "dark", ...B, pts: "363,340 380,300 410,290 430,280 460,290 458,335 467,350 460,385 400,402 385,380 368,365" },
  { id: "k", tone: "light", ...B, pts: "172,210 205,198 229,198 227,280 278,305 279,340 228,355 185,387 180,380 193,355 193,290 180,265" },
  { id: "l", tone: "mixed", ...B, pts: "638,370 645,340 685,297 705,345 685,370" },
  { id: "m", tone: "dark", ...B, pts: "698,370 710,305 732,300 747,345 715,373" },
  { id: "n", tone: "mixed", ...B, pts: "808,370 820,360 840,380 837,403 815,400" },
  { id: "o", tone: "dark", ...B, pts: "148,465 155,445 175,438 200,445 203,480 185,491 155,488" },
  { id: "p", tone: "light", ...B, pts: "1172,585 1205,582 1245,620 1245,635 1205,705 1145,710 1142,697 1155,685 1170,630" },
  { id: "q", tone: "light", ...B, pts: "322,957 375,951 413,960 413,985 385,1003 360,1010 340,1003 322,993" },
  { id: "r", tone: "light", ...B, pts: "690,910 750,885 775,868 805,880 805,905 795,925 750,943 748,985 725,992 700,970 690,940" },
];

const randomFrom = (seed: number) => {
  let s = seed;
  return () => {
    s = (s * 1664525 + 1013904223) >>> 0;
    return s / 4294967296;
  };
};

const StoneShape = ({ stone, seed }: { stone: Stone; seed: number }) => {
  const pts = stone.pts.split(" ").map((p) => {
    const [x, y] = p.split(",").map(Number);
    return [stone.ox + x / stone.sx, stone.oy + y / 3];
  });
  const xs = pts.map((p) => p[0]);
  const ys = pts.map((p) => p[1]);
  const x0 = Math.floor(Math.min(...xs));
  const x1 = Math.max(...xs);
  const y0 = Math.floor(Math.min(...ys));
  const y1 = Math.max(...ys);
  const rnd = randomFrom(seed * 7919 + 13);
  const count = Math.round(((x1 - x0) * (y1 - y0)) / 4.5);
  const base = { light: "#d8d8d8", dark: "#303030", mixed: "#7c7c7c" }[stone.tone];
  const shade = () => {
    const r = rnd();
    if (stone.tone === "light") return 198 + Math.round(r * 36);
    if (stone.tone === "dark") return rnd() < 0.72 ? 24 + Math.round(r * 50) : 90 + Math.round(r * 80);
    return rnd() < 0.5 ? 45 + Math.round(r * 50) : 120 + Math.round(r * 75);
  };
  return (
    <g shapeRendering="crispEdges">
      <clipPath id={`stone-${stone.id}`}>
        <polygon points={pts.map((p) => p.join(",")).join(" ")} />
      </clipPath>
      <g clipPath={`url(#stone-${stone.id})`}>
        <rect x={x0} y={y0} width={x1 - x0 + 1} height={y1 - y0 + 1} fill={base} />
        {Array.from({ length: count }, (_, i) => {
          const g = shade();
          return (
            <rect
              key={i}
              x={x0 - 1 + Math.floor(rnd() * (x1 - x0 + 1))}
              y={y0 - 1 + Math.floor(rnd() * (y1 - y0 + 1))}
              width={1 + Math.floor(rnd() * 5)}
              height={stone.tone === "light" ? 1 : 1 + Math.floor(rnd() * 5)}
              fill={`rgb(${g},${g},${g})`}
            />
          );
        })}
      </g>
    </g>
  );
};

const edges =
  "M938.6 79L1015.4 781.7M966 79L1042.9 773.3M1402.7 79L1453.6 543.7M1430 79L1480.7 536.3" +
  "M1022 585.3L1480.7 536.3M995 593L1453.6 543.7M1366.7 342L1409.3 734M1339 350.8L1381.4 742.3" +
  "M999.8 381.3L1366.7 342M973 390L1339 350.8M1015.4 781.7L1381.4 742.3M1042.9 773.3L1409.3 734";
const depthEdges = "M973 390L999.8 381.3M1339 350.8L1366.7 342M1015.4 781.7L1042.9 773.3M1381.4 742.3L1409.3 734M995 593L1022 585.3M1453.6 543.7L1480.7 536.3";

const SceneView = () => (
  <Scene viewBox="561 78 1296 801" fill="none">
    <path d={depthEdges} stroke="#5c5c00" shapeRendering="crispEdges" />
    <path d={edges} stroke="#a2a200" shapeRendering="crispEdges" />
    <path d="M938.6 79L941 101M966 79L968.4 101M1402.7 79L1405.1 101M1430 79L1432.4 101" stroke="#d4d400" shapeRendering="crispEdges" />
    {stones.map((s, i) => <StoneShape key={s.id} stone={s} seed={i + 1} />)}
    <path d="M1012.7 500L1014 512L1018 549" stroke="#77775a" strokeWidth="4" opacity=".7" />
    <path d="M1012.5 500L1018.200 552M995 593L1022 585.3M1184 757.800L1207 755.300M1307 347.500L1326 346" stroke="#a2a200" shapeRendering="crispEdges" />
    <path d="M1423 178L1425.500 186" stroke="#26261c" strokeWidth="4" />
    <path d="M1455.500 833V840M1760.500 833V840M1455 836.500H1761" stroke="#fff" shapeRendering="crispEdges" />
    <path d="M1810.500 837L1812.500 861.500" stroke="#f00" strokeWidth="3" shapeRendering="crispEdges" />
    <path d="M1809 836.500L1835 834" stroke="#0f0" strokeWidth="3" shapeRendering="crispEdges" />
    <rect x="1810" y="835" width="4" height="3" fill="#00a0ff" />
    <g fontFamily="DejaVu Sans, sans-serif" fontSize="12" textAnchor="middle">
      <text x="1607.500" y="860" fill="#fff" letterSpacing="-.5">25</text>
      <text x="1842.500" y="837" fill="#0f0">Y</text>
      <text x="1820" y="836.500" fill="#00a0ff" fontSize="11">Z</text>
      <text x="1812.500" y="875" fill="#e01010">X</text>
    </g>
  </Scene>
);

/* ---------- small glyphs ---------- */

const FloatGlyph = styled.svg`
  width: 9px;
  height: 9px;
  overflow: visible;
`;
const Restore = ({ color = "#333" }: { color?: string }) => (
  <FloatGlyph viewBox="0 0 9 9" fill="none" stroke={color}>
    <path d="M2.500 3V.5H8.500V5.500H6.500M2.500 1.500H8.500M.5 3.500H6.500V8.500H.5ZM.5 4.500H6.500" />
  </FloatGlyph>
);
const Cross = ({ color = "#333" }: { color?: string }) => (
  <FloatGlyph viewBox="0 0 9 9" fill="none" stroke={color} strokeWidth="2">
    <path d="M1.500 1.500L7.500 7.500M7.500 1.500L1.500 7.500" />
  </FloatGlyph>
);
const CaptionGlyph = styled.svg`
  width: 13px;
  height: 12px;
`;
const Ticks = styled.svg`
  width: 9px;
  height: 9px;
`;
const Expander = styled.i`
  width: 12px;
  height: 8px;
  margin-right: 7px;
  background: #644745;
  clip-path: polygon(0 0, 100% 0, 50% 100%);
`;

const CheckBox = ({ on = false }: { on?: boolean }) => (
  <Check>{on && <Ticks viewBox="0 0 9 9"><path d="M.5 4.500L3.200 7.200L8.500 1.500" fill="none" stroke="#222" strokeWidth="1.200" /></Ticks>}</Check>
);

const Tools = ({ names }: { names: string[] }) => <>{names.map((n) => <Slot key={n}><Icon name={n} /></Slot>)}</>;

const toolGroups = [
  ["histogram", "gauss", "minmax", "trash", "plus", "calc", "sf"],
  ["canupoCreate", "canupoClassifyGrey"],
  ["kd", "fm", "shp", "csv", "pie", "sphere"],
  ["puzzle", "nc", "mls"],
  ["sRed", "sGrey", "unroll"],
];
const leftTools = ["monitor", "camera", "one", "cross", "auto", "camDir", "purple", "move", "zoom", "cubeTop", "cubeFront", "cubeLeft", "cubeBack", "cubeRight", "cubeBottom", "isoFront", "isoBack", "flickr"];
const rightTools = ["m3c2", "shield", "pcv", "poisson", "rsd", "autoseg", "layers", "ellipse", "json", "manual", "mplane"];

const LastToolGroup = styled(ToolGroup)`
  border-right: 0;
`;

export default function App() {
  return (
    <Shell>
      <GlobalStyle />
      <TitleBar>
        <Icon name="logo" size={14} />
        <TitleText>CloudCompare v2.12.4 (Kyiv) [64-bit] - [3D View 1]</TitleText>
        <CaptionButtons>
          <CaptionGlyph viewBox="0 0 13 12" fill="none" stroke="#000"><path d="M2 6.500H11" /></CaptionGlyph>
          <CaptionGlyph viewBox="0 0 13 12" fill="none" stroke="#000"><path d="M2.500 3.500H9.500V10.500H2.500ZM4.500 3.500V1.500H11.500V8.500H9.500" /></CaptionGlyph>
          <CaptionGlyph viewBox="0 0 13 12" fill="none" stroke="#000"><path d="M3 1.500L12 10.500M12 1.500L3 10.500" /></CaptionGlyph>
        </CaptionButtons>
      </TitleBar>
      <Progress />
      <MenuBar>
        <Icon name="logo" size={14} />
        <MenuTitle $w={36}>File</MenuTitle>
        <MenuTitle $w={34}>Edit</MenuTitle>
        <MenuTitle $w={45}>Tools</MenuTitle>
        <MenuTitle $w={53}>Display</MenuTitle>
        <MenuTitle $w={55} $open>Plugins</MenuTitle>
        <MenuTitle $w={63}>3D Views</MenuTitle>
        <MenuTitle $w={41}>Help</MenuTitle>
        <MdiButtons>
          <MdiButton><FloatGlyph viewBox="0 0 9 9"><path d="M2 7H7" stroke="#5f6f80" strokeWidth="2" /></FloatGlyph></MdiButton>
          <MdiButton><Restore color="#5f6f80" /></MdiButton>
          <MdiButton><Cross color="#5f6f80" /></MdiButton>
        </MdiButtons>
      </MenuBar>
      <ToolBar>
        <ToolGroup>
          <Grip />
          <Tools names={["open", "save"]} />
          <ToolSeparator />
          <Tools names={["pick", "list", "pointPick", "rainbow"]} />
          <UnderMenu />
          <Tools names={["meshDist", "sampling", "cccc", "shapes", "checker", "sor"]} />
          <ToolSeparator />
          <Tools names={["scissors", "translate", "section", "polyline"]} />
        </ToolGroup>
        {toolGroups.map((g) => (
          <ToolGroup key={g[0]}>
            <Grip />
            <Tools names={g} />
          </ToolGroup>
        ))}
        <LastToolGroup>
          <Grip />
          <Tools names={["rgb", "hsv", "greyHills", "hHills", "kHills"]} />
        </LastToolGroup>
      </ToolBar>
      <Body>
        <Center>
          <CenterRow>
            <SideBar>
              <Grip $row />
              <LeftIcons>
                {leftTools.map((n) => <SideSlot key={n} $on={n === "auto"}><Icon name={n} size={n.startsWith("cube") ? 23 : 24} /></SideSlot>)}
              </LeftIcons>
            </SideBar>
            <Docks>
              <DockTitle>DB Tree<Restore /></DockTitle>
              <TreeBox>
                <TreeRow><Expander /><CheckBox on /><Icon name="tree" size={16} /><TreeText>surface-fersman</TreeText></TreeRow>
                <TreeRow $child $selected><Branch /><CheckBox on /><Icon name="cloud" size={16} /><TreeText>bushes</TreeText></TreeRow>
                <TreeRow $child $selected><Branch /><CheckBox on /><Icon name="cloud" size={16} /><TreeText>bedrock</TreeText></TreeRow>
                <TreeRow $child><Branch $last /><CheckBox /><Icon name="cloudGrey" size={16} /><TreeText>surface-fersman</TreeText><RowTail>pct_time_normals_s...</RowTail></TreeRow>
              </TreeBox>
              <DockTitle>Properties<Restore /></DockTitle>
              <PropertyBox />
            </Docks>
            <ViewArea>
              <FilterStrip>[GL filter] EyeDome Lighting (disable normals and increase points size for a better result!)</FilterStrip>
              <SceneView />
            </ViewArea>
          </CenterRow>
          <ConsoleRow>
            <ConsoleTitle>Console<DockButtons><Restore /><Cross /></DockButtons></ConsoleTitle>
          </ConsoleRow>
        </Center>
        <RightBar>
          <Grip $row />
          <RightTop>
            <SideSlot><Icon name="forbid" /></SideSlot>
            <SideSlot $on><Icon name="edl" /></SideSlot>
            <SideSlot><Icon name="ssao" /></SideSlot>
          </RightTop>
          <RightRule />
          <Grip $row />
          <RightGroup>
            <SideSlot><Icon name="clapper" /></SideSlot>
            <SideSlot><Icon name="broom" /></SideSlot>
            <SideSlot><Icon name="compass" /></SideSlot>
            <SideSlot><Icon name="shield" size={22} /></SideSlot>
          </RightGroup>
          <RightLabel>CSF Filter</RightLabel>
          <SideSlot><Icon name="hough" /></SideSlot>
          <SideSlot><Icon name="hpr" /></SideSlot>
          {rightTools.map((n) => <SideSlot key={n}><Icon name={n} size={n === "json" ? 17 : n === "shield" ? 22 : 24} /></SideSlot>)}
        </RightBar>
      </Body>
      <Popup $x={183} $y={43} $w={245}><MenuEntries entries={pluginEntries} /></Popup>
      <Popup $x={421} $y={87} $w={147}><MenuEntries entries={canupoEntries} /></Popup>
    </Shell>
  );
}
